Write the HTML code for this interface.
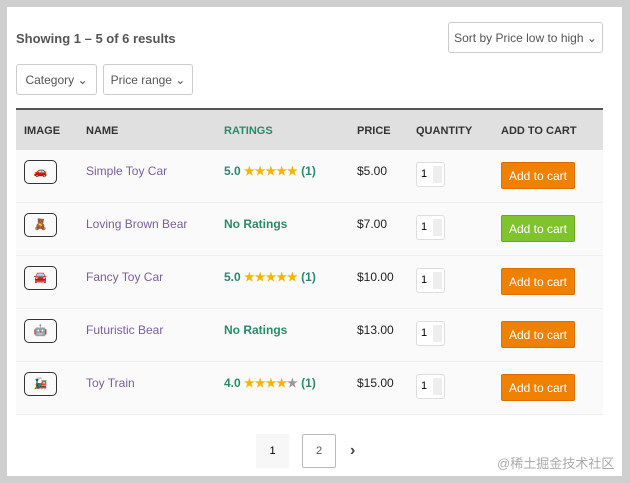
<html><head><style>
body{margin:0;width:630px;height:483px;background:#cfcfcf;font-family:"Liberation Sans",sans-serif;position:relative;overflow:hidden}
.w{position:absolute;left:7px;top:7px;width:615px;height:469px;background:#fff}
.a{position:absolute}
.sel{position:absolute;border:1px solid #ccc;border-radius:3px;font-size:12px;color:#555;box-sizing:border-box;display:flex;align-items:center;justify-content:center}
.row{position:absolute;left:16px;width:587px;height:52px;background:#fafafa;border-bottom:1px solid #eee;font-size:12px}
.row>*{position:absolute}
.img{left:8px;top:10px;width:33px;height:24px;border:1px solid #333;border-radius:5px;box-sizing:border-box;font-size:11px;text-align:center;line-height:22px}
.nm{left:70px;top:14px;color:#7a5f9a}
.rt{left:208px;top:14px;color:#2a8a6a;font-weight:bold}
.st{color:#f5b400}
.pr{left:341px;top:14px;color:#222}
.q{left:400px;top:12px;width:29px;height:25px;border:1px solid #ddd;border-radius:3px;box-sizing:border-box;font-size:11px;line-height:23px;padding-left:4px;background:#fff}
.q:after{content:"";position:absolute;right:2px;top:3px;width:9px;height:17px;background:#eee}
.b{left:485px;top:12px;width:74px;height:27px;background:#f08000;border:1px solid #d86f00;border-radius:2px;color:#fff;font-size:12px;line-height:26px;text-align:center;box-sizing:border-box}
</style></head><body><div class="w"></div>
<div class="a" style="left:16px;top:31px;font-size:13px;font-weight:bold;color:#555">Showing 1 – 5 of 6 results</div>
<div class="sel" style="left:448px;top:22px;width:155px;height:31px">Sort by Price low to high ⌄</div>
<div class="sel" style="left:16px;top:64px;width:81px;height:31px">Category ⌄</div>
<div class="sel" style="left:103px;top:64px;width:90px;height:31px">Price range ⌄</div>
<div class="a" style="left:16px;top:108px;width:587px;height:41px;background:#e0e0e0;border-top:2px solid #555;font-size:11px;font-weight:bold;color:#333">
<span class="a" style="left:8px;top:15px">IMAGE</span><span class="a" style="left:70px;top:15px">NAME</span><span class="a" style="left:208px;top:15px;color:#2a8a6a">RATINGS</span><span class="a" style="left:341px;top:15px">PRICE</span><span class="a" style="left:400px;top:15px">QUANTITY</span><span class="a" style="left:485px;top:15px">ADD TO CART</span></div>
<div class="row" style="top:150px"><div class="img">🚗</div><div class="nm">Simple Toy Car</div><div class="rt">5.0 <span class="st">★★★★★</span> (1)</div><div class="pr">$5.00</div><div class="q">1</div><div class="b">Add to cart</div></div>
<div class="row" style="top:203px"><div class="img">🧸</div><div class="nm">Loving Brown Bear</div><div class="rt">No Ratings</div><div class="pr">$7.00</div><div class="q">1</div><div class="b" style="background:#7fc32e;border-color:#6aa822">Add to cart</div></div>
<div class="row" style="top:256px"><div class="img">🚘</div><div class="nm">Fancy Toy Car</div><div class="rt">5.0 <span class="st">★★★★★</span> (1)</div><div class="pr">$10.00</div><div class="q">1</div><div class="b">Add to cart</div></div>
<div class="row" style="top:309px"><div class="img">🤖</div><div class="nm">Futuristic Bear</div><div class="rt">No Ratings</div><div class="pr">$13.00</div><div class="q">1</div><div class="b">Add to cart</div></div>
<div class="row" style="top:362px"><div class="img">🚂</div><div class="nm">Toy Train</div><div class="rt">4.0 <span class="st">★★★★</span><span style="color:#999">★</span> (1)</div><div class="pr">$15.00</div><div class="q">1</div><div class="b">Add to cart</div></div>
<div class="a" style="left:256px;top:434px;width:33px;height:34px;background:#f7f7f7;font-size:11px;text-align:center;line-height:34px">1</div>
<div class="a" style="left:302px;top:434px;width:34px;height:34px;border:1px solid #bbb;border-radius:2px;box-sizing:border-box;font-size:11px;text-align:center;line-height:32px;color:#555">2</div>
<div class="a" style="left:350px;top:442px;font-size:16px;font-weight:bold;color:#444">›</div>
<div class="a" style="left:497px;top:453px;font-size:13px;color:#aaa;font-family:'Liberation Sans','Noto Sans CJK SC',sans-serif">@稀土掘金技术社区</div>
</body></html>
